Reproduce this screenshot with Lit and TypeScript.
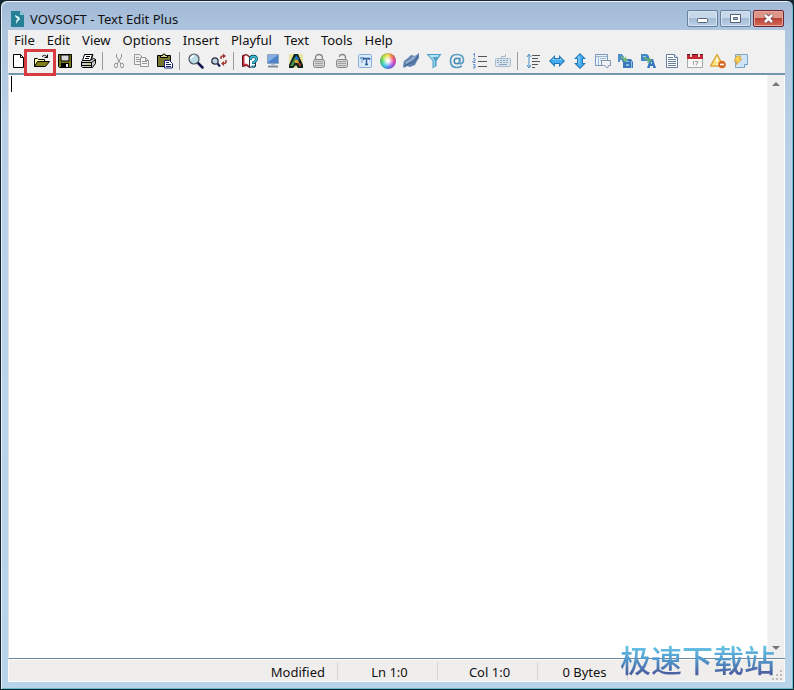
import { LitElement, html, css, svg, nothing, type SVGTemplateResult } from "lit";
import { customElement, property } from "lit/decorators.js";

const icons: Record<string, SVGTemplateResult> = {
  new: svg`<path d="M2.500 1.500h7l3 3v10h-10z" fill="#fff" stroke="#000"/><path d="M9.500 1.500v3h3" fill="none" stroke="#000"/>`,
  open: svg`<path d="M.500 13.500v-8h3l1 1h6v2" fill="#ffffa0" stroke="#000"/><path d="M.500 13.500l3-5h12l-4 5z" fill="#808018" stroke="#000"/><path d="M8 3.500q2.500-2.500 5 0M13.500 1.500v3h-3" fill="none" stroke="#000"/>`,
  save: svg`<path d="M1.500 1.500h13v13h-12l-1-1z" fill="#77771c" stroke="#000"/><path d="M4 2h8v6h-8z" fill="#d8d8d8" stroke="#000"/><path d="M4 10h8v4h-8z" fill="#000"/><path d="M9 11h2v3h-2z" fill="#e8e8e8"/>`,
  print: svg`<path d="M5 1.500h8l-2 6h-8z" fill="#fff" stroke="#000"/><path d="M6 3.500h5M5 5.500h5" stroke="#000"/><path d="M1.500 8.500l2-2h8l2-1 2 1v4l-3 4h-10l-1-1z" fill="#c8c8c8" stroke="#000"/><path d="M4.500 1.500h8l-2 6h-8z" fill="#fff" stroke="#000"/><path d="M6 3.500h4M5 5.500h4M1.500 9.500h10v5M11.500 9.500l4-3M2 12.500h9" fill="none" stroke="#000"/><path d="M7 10.500h3v1h-3z" fill="#cccc30"/>`,
  cut: svg`<g fill="none" stroke="#929292"><path d="M5.500 1v3l4.500 7M10.500 1v3l-4.500 7"/><ellipse cx="5" cy="12.500" rx="1.600" ry="2.300"/><ellipse cx="11" cy="12.500" rx="1.600" ry="2.300"/></g>`,
  copy: svg`<g fill="#f3f3f3" stroke="#969696"><path d="M.500 1.500h5l3 3v7h-8z"/><path d="M2 4.500h3M2 6.500h4M2 8.500h4"/><path d="M6.500 4.500h5l3 3v6h-8z"/><path d="M11.500 4.500v3h3M8 8.500h5M8 10.500h5" fill="none"/></g>`,
  paste: svg`<path d="M.500 2.500h13v11h-13z" fill="#77752f" stroke="#000"/><path d="M3.500 4.500v-2h2q0-1.500 1.500-1.500t1.500 1.500h2v2z" fill="#ddd68a" stroke="#000"/><path d="M7.500 7.500h5l3 3v4.500h-8z" fill="#fff" stroke="#182070"/><path d="M9 9.500h3M9 11.500h5M9 13.500h5" stroke="#182070"/>`,
  find: svg`<path d="M10 10l4.500 4.500" stroke="#141450" stroke-width="2.500" stroke-linecap="round"/><circle cx="6" cy="6" r="5" fill="#bcdbe6" stroke="#4b555d" stroke-width="1.200"/><path d="M3 6q0-3 3-3" fill="none" stroke="#fff" stroke-width="1.500"/>`,
  replace: svg`<path d="M6.500 10.500l2.500 3" stroke="#181850" stroke-width="2"/><circle cx="4" cy="8" r="3.200" fill="#bdd1df" stroke="#252b40" stroke-width="1.200"/><path d="M10 6V4.500Q10 3 12 3M15 7v1.500q0 2-2 2" fill="none" stroke="#a83434" stroke-width="1.500"/><path d="M12 .500l3 2.500-3 2.500zM13 8l-3 2.500 3 2.500z" fill="#a83434"/>`,
  book: svg`<path d="M.500 2.500l4-1 3 2v11l-3-2-4 1z" fill="#c92d3a" stroke="#5b101c"/><path d="M2.500 3l2-.500 2.500 2v8l-2.500-2-2 .500z" fill="#fff"/><path d="M7.500 3.500q3-2 6-1v11q-3-.500-6 1z" fill="#f2fcff" stroke="#202830"/><path d="M8.500 7V6q0-2.500 3-2.500t3 2.500q0 2-3 3.500v1.500M11.500 12.500v2.500" fill="none" stroke="#075d75" stroke-width="2.800"/><path d="M8.500 6.500V6q0-2.500 3-2.500t3 2.500q0 2-3 3.500v1M11.500 13v1.500" fill="none" stroke="#43bdd1" stroke-width="1.400"/>`,
  monitor: svg`<path d="M2.500 1.500h11v9h-11z" fill="#4d83c8" stroke="#8ea5bd"/><path d="M3 2h10l-10 7z" fill="#83aee6"/><path d="M6 11h4v1h3v3h-10v-3h3z" fill="#b8c1ca"/><path d="M3 13.500h10" stroke="#7e8993"/>`,
  fontColor: svg`<path d="M1 1h14v14h-14z" fill="#e5e39d"/><path d="M6 1h4l5 11v3h-5l-2-3-3 3h-4v-3z" fill="#10211b"/><path d="M7 4l2 1-4 8h-3z" fill="#48924a"/><path d="M8 2l3 4-1 2-3-3z" fill="#2873c8"/><path d="M7 7h3l1 3h-4z" fill="#dda334"/><path d="M10 10h2l1 3h-2z" fill="#c43d2b"/>`,
  lock: svg`<path d="M4.500 8V5q0-3.500 3.500-3.500t3.500 3.500V8" fill="none" stroke="#858585" stroke-width="1.300"/><rect x="2.500" y="6.500" width="11" height="8" rx="2" fill="#d5d5d5" stroke="#858585"/><path d="M4 8.500h8M4 10.500h8M4 12.500h8" stroke="#a2a2a2"/>`,
  unlock: svg`<path d="M11.500 8V4q0-2.500-3-2.500t-3 2.500" fill="none" stroke="#858585" stroke-width="1.300"/><rect x="2.500" y="6.500" width="11" height="8" rx="2" fill="#d5d5d5" stroke="#858585"/><path d="M4 8.500h8M4 10.500h8M4 12.500h8" stroke="#a2a2a2"/>`,
  textBox: svg`<rect x="1.500" y="1.500" width="13" height="13" rx="1" fill="#d9eafa" stroke="#86addb"/><path d="M6.500 7V5.500h6V7M9.500 5.500v6M8 11.500h3" fill="none" stroke="#315f9d" stroke-width="1.500"/><path d="M3.500 6V4.500h4M5 5v5" fill="none" stroke="#6f9ccc"/>`,
  filter: svg`<path d="M.500 1h15l-5 7v5l-4 2.500V8z" fill="#4c9fcb"/><path d="M3 2h10l-1 2h-8z" fill="#b6e3f3"/><path d="M4 4h3l2 4v5l-1.500 1V8z" fill="#94d0e8"/>`,
  eraser: svg`<path d="M0 13l1-5 4-3 3-3 4 1 4-3v5l-2 3-2 4-5 2-3-1-3 2z" fill="#5d80b0"/><path d="M2 9l4-2 3-3 5-2-3 4-4 3-4 2z" fill="#91abc9"/><path d="M2 13l5-3 4-1 4-6" fill="none" stroke="#3f6090"/>`,
  at: svg`<circle cx="8" cy="8" r="2.800" fill="none" stroke="#4289b8" stroke-width="1.500"/><path d="M11 4.500l-.500 5q0 2 2 1t2-3.500q0-5.500-6.500-5.500T1.500 8q0 6.500 6.500 6.500 2.500 0 5-1.500" fill="none" stroke="#579bc3" stroke-width="1.700"/>`,
  list: svg`<path d="M6 3.500h9M6 8.500h9M6 13.500h9" stroke="#555"/><path d="M2.500 0v4M1 1.500h1.500M1 5.500h2v2.500h-2v1.500h2.500M1 11.500h2v2h-1.500M3 13.500v1.500h-2" fill="none" stroke="#6795d0"/>`,
  keyboard: svg`<path d="M6.500 5V3.500h4V1" fill="none" stroke="#a5b8cd"/><rect x=".500" y="5.500" width="15" height="8" rx="1" fill="#dce6ef" stroke="#a8bacd"/><path d="M2 7.500h12M2 9.500h12" stroke="#8ba3bd" stroke-dasharray="2 1"/><path d="M4 11.500h8" stroke="#8ba3bd"/>`,
  spacing: svg`<path d="M6 2.500h8M6 5.500h6M6 8.500h8M6 11.500h6M6 14.500h3" stroke="#555"/><path d="M3 2v12M1 4l2-3 2 3M1 12l2 3 2-3" fill="none" stroke="#4b8fc5"/>`,
  horizontal: svg`<path d="M0 8l6-6v3h4V2l6 6-6 6v-3H6v3z" fill="#2478b8"/><path d="M1.500 8L5 4.500V6h6V4.500L14.500 8 11 11.500V10H5v1.500z" fill="#43acf0"/><path d="M3 7l2-2v1.500h6V5l2 2z" fill="#8ed5fa"/>`,
  vertical: svg`<path d="M8 0l6 6h-3v4h3l-6 6-6-6h3V6H2z" fill="#2478b8"/><path d="M8 1.500L11.500 5H10v6h1.500L8 14.500 4.500 11H6V5H4.500z" fill="#43acf0"/><path d="M7.500 2.500v10L6.500 11V5H5z" fill="#8ed5fa"/>`,
  windows: svg`<path d="M.500 1.500h12v11h-12z" fill="#edf5fc" stroke="#7896bd"/><path d="M1 3.500h11M3.500 4v8M5 5.500h6M5 7.500h3" stroke="#9fb6d1"/><path d="M6.500 7.500h9v5h-2l-1 2.500-3-2.500h-3z" fill="#eef2f6" stroke="#8393a8"/>`,
  upper: svg`<path d="M0 1h4l2 3v5H4V7H2v2H0z" fill="#4f8fc8"/><path d="M5 6h8l2 3v6H5z" fill="#3978bd"/><path d="M8 8h3v1H8zM8 11h3v2H8zM13 8h1v7h-1z" fill="#91bce2"/><path d="M3 3l4 2V3l3 5-5 1 1-2-3-2z" fill="#71b978"/>`,
  lower: svg`<path d="M0 1h6l2 2v5H0z" fill="#4389c8"/><path d="M2 3h3v1H2z" fill="#a2c9e8"/><path d="M9 6h3l3 9h-3v-2H9v2H6l2-6z" fill="#3978bd"/><path d="M10 9h1v2h-1z" fill="#b8d5ee"/><path d="M3 4l5 2V4l3 4-5 2 1-2-4-2z" fill="#65ad75"/>`,
  document: svg`<path d="M2.500 1.500h8l3 3v10h-11z" fill="#fff" stroke="#667f9e"/><path d="M10.500 1.500v3h3" fill="#dce8f5" stroke="#667f9e"/><path d="M4 4.500h5M4 6.500h8M4 8.500h8M4 10.500h8M4 12.500h8" stroke="#66809b"/>`,
  calendar: svg`<path d="M.500 2.500h15v12h-15z" fill="#faf7f5" stroke="#aaa"/><path d="M0 1h16v5H0z" fill="#c72934"/><path d="M0 1h16v1H0z" fill="#511e25"/><path d="M4 0v4M12 0v4" stroke="#f8dcdc" stroke-width="2"/><path d="M6.500 8v4M8 8.500h3l-2 4" fill="none" stroke="#a0a0a0"/>`,
  warning: svg`<path d="M7 1.500L13.500 13H.500z" fill="#ffe276" stroke="#d9aa48" stroke-width="1.500" stroke-linejoin="round"/><path d="M7 5v4M7 10.500V12" stroke="#fff" stroke-width="1.700"/><circle cx="12" cy="11.500" r="3.800" fill="#d56b24"/><path d="M10 11.500h4" stroke="#fff" stroke-width="1.500"/>`,
  flash: svg`<path d="M2.500 1.500h12v10l-3 3h-9z" fill="#cfe4f5" stroke="#84a6c5"/><path d="M11.500 14.500v-3h3" fill="#fff" stroke="#7299bd"/><path d="M4 3h4L6 6h3l-6 6 1-4H1z" fill="#f8d650" stroke="#dca449"/>`,
};

const toolGroups: [string, string][][] = [
  [["new", "New"], ["open", "Open"], ["save", "Save"], ["print", "Print"]],
  [["cut", "Cut"], ["copy", "Copy"], ["paste", "Paste"]],
  [["find", "Find"], ["replace", "Replace"]],
  [["book", "Dictionary"], ["monitor", "Full screen"], ["fontColor", "Font"], ["lock", "Encrypt"], ["unlock", "Decrypt"], ["textBox", "Text"], ["wheel", "Colors"], ["eraser", "Clear"], ["filter", "Filter"], ["at", "Email addresses"], ["list", "Numbering"], ["keyboard", "Keyboard"]],
  [["spacing", "Line spacing"], ["horizontal", "Reverse horizontally"], ["vertical", "Reverse vertically"], ["windows", "Windows"], ["upper", "Uppercase"], ["lower", "Lowercase"], ["document", "Statistics"], ["calendar", "Date"], ["warning", "Remove errors"], ["flash", "Run"]],
];

const menus = ["File", "Edit", "View", "Options", "Insert", "Playful", "Text", "Tools", "Help"];

@customElement("tool-button")
export class ToolButton extends LitElement {
  @property() icon = "";
  @property() label = "";
  @property({ type: Boolean }) marked = false;

  static styles = css`
    :host { display: block; flex: none; position: relative; width: 23px; height: 24px; }
    button { display: block; width: 23px; height: 24px; margin: 0; padding: 4px 4px 4px 3px; border: 0; background: none; }
    svg, .wheel { display: block; width: 16px; height: 16px; }
    .wheel {
      border-radius: 50%;
      background:
        radial-gradient(circle, #fff 8%, transparent 55%),
        conic-gradient(#f5de4b, #f06a45, #df3ba5, #a04be8, #4288f0, #30cbd8, #45d364, #b5e23c, #f5de4b);
      box-shadow: inset 0 0 0 1px rgba(110, 100, 130, 0.4);
    }
    .mark { position: absolute; top: 0; left: -7px; box-sizing: border-box; width: 32px; height: 27px; border: 3px solid #d83c40; pointer-events: none; z-index: 1; }
  `;

  render() {
    return html`
      <button type="button" aria-label=${this.label} title=${this.label}>
        ${this.icon === "wheel"
          ? html`<span class="wheel"></span>`
          : html`<svg viewBox="0 0 16 16" aria-hidden="true">${icons[this.icon]}</svg>`}
      </button>
      ${this.marked ? html`<span class="mark"></span>` : nothing}
    `;
  }
}

@customElement("app-root")
export class AppRoot extends LitElement {
  static styles = css`
    :host {
      display: block;
      background: #10292e;
      color: #111;
      font: 13px/16px "Noto Sans", "Noto Sans CJK SC", sans-serif;
    }
    * { box-sizing: border-box; }
    button { font: inherit; color: inherit; }
    .window {
      position: relative;
      display: flex;
      flex-direction: column;
      min-height: 100vh;
      padding: 0 8px 7px 7px;
      border: 1px solid #17242b;
      border-radius: 7px 7px 0 0;
      background: linear-gradient(#a0b9d6, #afc5df 30px, #b9cfe7 120px, #bcd2ec 300px, #b8d4ea);
      box-shadow: inset 1px 1px #e9f1f8, inset -1px -1px #63bfd0;
    }
    .title { display: flex; align-items: center; height: 29px; padding: 6px 1px 0 2px; }
    .logo { display: block; width: 16px; height: 16px; margin-right: 4px; }
    h1 { flex: 1; margin: 0; font: inherit; white-space: nowrap; }
    .caption { display: flex; gap: 2px; align-self: flex-start; padding-top: 3px; }
    .caption button {
      display: block; width: 31px; height: 17px; margin: 0; padding: 0;
      border: 1px solid #657f9f; border-radius: 2px;
      background: linear-gradient(#c7d8eb 50%, #a4bbd5 50%, #bad1e8);
      box-shadow: inset 0 0 0 1px #d6e4f1;
    }
    .caption .close {
      border-color: #6f2630;
      background: linear-gradient(#dd9589 45%, #b94338 50%, #d36c56);
      box-shadow: inset 0 0 0 1px #e6a79c;
    }
    .caption svg { display: block; width: 29px; height: 15px; }
    .client { flex: 1; display: flex; flex-direction: column; background: #f0f0f0; }
    .menu { display: flex; height: 19px; }
    .menu button { padding: 2px 6px 1px; border: 0; background: none; line-height: 16px; }
    .tools { display: flex; height: 24px; }
    .group { display: flex; }
    .group + .group::before { content: ""; width: 1px; height: 18px; margin: 3px 5px 3px 2px; background: #9b9b9b; }
    .editor { position: relative; flex: 1; display: flex; border: solid #6e879c; border-width: 1px 0; border-top: 2px solid #7396ad; border-left: 1px solid #e5e5e5; background: #fff; }
    textarea { flex: 1; min-width: 0; margin: 0; padding: 0 3px; border: 0; outline: 0; resize: none; background: #fff; font: inherit; }
    .caret { position: absolute; top: 1px; left: 2px; width: 1px; height: 16px; background: #000; }
    .scroll { display: flex; flex-direction: column; justify-content: space-between; width: 17px; background: #efefef; border-left: 1px solid #f5f5f5; }
    .scroll button { width: 16px; height: 17px; padding: 0; border: 0; background: none; }
    .scroll svg { display: block; width: 16px; height: 17px; }
    .edge { width: 1px; background: #fff; }
    .status { display: flex; height: 23px; border: 1px solid #fbfbfb; background: #f0eeed; }
    .cell { width: 100px; margin: 2px 0 1px; padding: 2px 0 0 4px; border-right: 1px solid #d5d5d5; line-height: 16px; text-align: center; }
    .cell.state { width: 329px; padding: 2px 12px 0 0; text-align: right; }
    .cell.bytes { width: 90px; }
    .grip { width: 12px; height: 12px; margin: auto 0 0 auto; }
    .watermark {
      position: absolute; right: 18px; bottom: 10px;
      font: 500 31px/40px "Noto Sans CJK SC", sans-serif;
      color: transparent;
      background: linear-gradient(#6cc8e8 15%, #529bcd 50%, #4b61a2 85%);
      background-clip: text;
      -webkit-background-clip: text;
      pointer-events: none;
    }
  `;

  render() {
    return html`
      <main class="window">
        <header class="title">
          <svg class="logo" viewBox="0 0 16 16" aria-hidden="true">
            <path d="M1 0h9l4 4v12H1z" fill="#258096"/><path d="M10 0l4 4h-4z" fill="#8bcbd1"/>
            <path d="M5 4l4 2 1 2-2 2-2 3 .500-4L8 8 5.500 6z" fill="#e6ffff"/>
          </svg>
          <h1>VOVSOFT - Text Edit Plus</h1>
          <div class="caption">
            <button type="button" aria-label="Minimize"><svg viewBox="0 0 29 15"><rect x="9.500" y="7.500" width="10" height="4" rx="1" fill="#fff" stroke="#536275"/></svg></button>
            <button type="button" aria-label="Maximize"><svg viewBox="0 0 29 15"><path d="M9.500 3.500h10v8h-10z" fill="#fff" stroke="#536275"/><path d="M12.500 6.500h4v2h-4z" fill="#afc4db" stroke="#536275"/></svg></button>
            <button type="button" class="close" aria-label="Close"><svg viewBox="0 0 29 15"><path d="M11 4l7 7M18 4l-7 7" stroke="#663c46" stroke-width="4"/><path d="M11 4l7 7M18 4l-7 7" stroke="#fff" stroke-width="2.600"/></svg></button>
          </div>
        </header>
        <section class="client">
          <nav class="menu">${menus.map((m) => html`<button type="button">${m}</button>`)}</nav>
          <div class="tools" role="toolbar" aria-label="Tools">
            ${toolGroups.map((group) => html`<div class="group">${group.map(([icon, label]) =>
              html`<tool-button icon=${icon} label=${label} ?marked=${icon === "open"}></tool-button>`)}</div>`)}
          </div>
          <div class="editor">
            <textarea aria-label="Document"></textarea>
            <span class="caret"></span>
            <div class="scroll">
              <button type="button" aria-label="Scroll up"><svg viewBox="0 0 16 17"><path d="M4 11l4-4 4 4z" fill="#777"/></svg></button>
              <button type="button" aria-label="Scroll down"><svg viewBox="0 0 16 17"><path d="M4 5l4 4 4-4z" fill="#777"/></svg></button>
            </div>
            <span class="edge"></span>
          </div>
          <footer class="status">
            <span class="cell state">Modified</span>
            <span class="cell">Ln 1:0</span>
            <span class="cell">Col 1:0</span>
            <span class="cell bytes">0 Bytes</span>
            <svg class="grip" viewBox="0 0 12 12" aria-hidden="true"><path d="M8 1h2v2h-2zM4 5h2v2h-2zM8 5h2v2h-2zM0 9h2v2h-2zM4 9h2v2h-2zM8 9h2v2h-2z" fill="#bcbcbc"/></svg>
          </footer>
        </section>
        <div class="watermark">极速下载站</div>
      </main>
    `;
  }
}
